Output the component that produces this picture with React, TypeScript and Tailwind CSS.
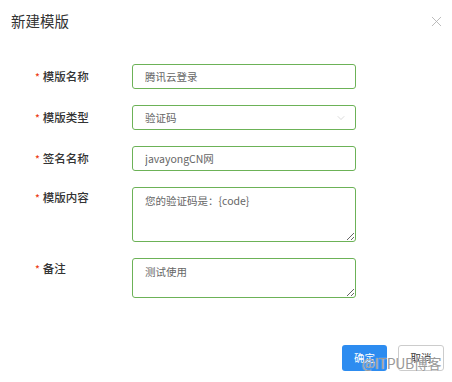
import { ChevronDown, X } from 'lucide-react';

const font = { fontFamily: '"Noto Sans CJK SC", "Noto Sans", sans-serif' };

function Label({ text }: { text: string }) {
  return (
    <div className="w-[132px] shrink-0 pl-[35px] flex items-center h-[25px] text-[11.5px] text-[#333] font-medium">
      <span className="text-[#ed4014] mr-[3px] text-[10px]">*</span>
      {text}
    </div>
  );
}

export default function App() {
  return (
    <div className="relative w-[452px] h-[382px] bg-white overflow-hidden" style={font}>
      {/* Header */}
      <div className="flex items-center justify-between pl-[11px] pr-[7px] pt-[11px] h-[32px]">
        <h1 className="text-[14.5px] text-[#333] leading-none">新建模版</h1>
        <X className="w-[17px] h-[17px] text-[#b0b0b0]" strokeWidth={1.2} />
      </div>

      {/* Form */}
      <div className="mt-[32px] flex flex-col gap-[16px]">
        <div className="flex">
          <Label text="模版名称" />
          <input
            readOnly
            defaultValue="腾讯云登录"
            className="w-[224px] h-[25px] border border-[#6cb257] rounded-[3px] pl-3 text-[10.5px] text-[#666] outline-none"
          />
        </div>
        <div className="flex">
          <Label text="模版类型" />
          <div className="w-[224px] h-[25px] border border-[#6cb257] rounded-[3px] pl-3 pr-[8px] flex items-center justify-between text-[10.5px] text-[#666]">
            <span>验证码</span>
            <ChevronDown className="w-[12px] h-[12px] text-[#c8c8c8]" strokeWidth={1.3} />
          </div>
        </div>
        <div className="flex">
          <Label text="签名名称" />
          <input
            readOnly
            defaultValue="javayongCN网"
            className="w-[224px] h-[25px] border border-[#6cb257] rounded-[3px] pl-3 text-[10.5px] text-[#666] outline-none"
          />
        </div>
        <div className="flex items-start">
          <div className="mt-[-2px]">
            <Label text="模版内容" />
          </div>
          <textarea
            readOnly
            defaultValue="您的验证码是：{code}"
            className="w-[224px] h-[55px] border border-[#6cb257] rounded-[3px] pl-3 pt-[5px] text-[10.5px] text-[#666] outline-none resize-y leading-[16px]"
          />
        </div>
        <div className="flex items-start">
          <div className="mt-[-2px]">
            <Label text="备注" />
          </div>
          <textarea
            readOnly
            defaultValue="测试使用"
            className="w-[224px] h-[40px] border border-[#6cb257] rounded-[3px] pl-3 pt-[5px] text-[10.5px] text-[#666] outline-none resize-y leading-[16px]"
          />
        </div>
      </div>

      {/* Footer */}
      <div className="mt-[47px] flex justify-end gap-[11px] pr-[8px]">
        <button className="w-[45px] h-[26px] rounded-[3px] bg-[#2d8cf0] text-white text-[10.5px]">确定</button>
        <button className="w-[46px] h-[26px] rounded-[3px] border border-[#ccc] bg-white text-[#333] text-[10.5px]">取消</button>
      </div>

      {/* Watermark */}
      <div className="absolute left-[362px] top-[356px] text-[14px] text-[#999] leading-none tracking-tight [text-shadow:0_0_1px_#fff]">
        @ITPUB博客
      </div>
    </div>
  );
}
